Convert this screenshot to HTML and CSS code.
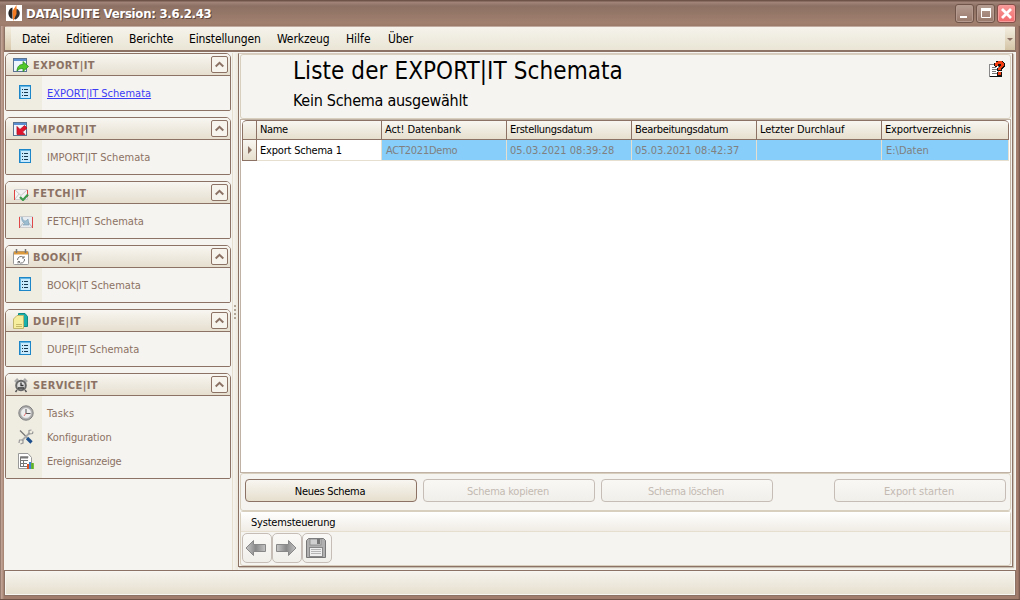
FILE: index.html
```html
<!DOCTYPE html>
<html lang="de">
<head>
  <meta charset="utf-8"/>
  <title>DATA|SUITE</title>
  <link rel="stylesheet" href="styles.css">
</head>
<body>
  <!-- Shared icons -->
  <svg class="hidden">
    <symbol id="list" viewBox="0 0 12 14">
      <rect x=".5" y=".5" width="11" height="13" fill="#c9eafc" stroke="#1c86c8"/>
      <path d="M1 1.5h10M1.5 1v12" stroke="#65b5e2"/>
      <path d="M3 4.500h1M3 7.500h1M3 10.500h1M5 4.500h4M5 7.500h4M5 10.500h4" stroke="#183850"/>
    </symbol>
    <symbol id="chevron" viewBox="0 0 15 15">
      <path d="M3.700 9.500l3.800-3.700 3.800 3.700" fill="none" stroke="#8b7264" stroke-width="2"/>
    </symbol>
    <linearGradient id="gray" x1="0" y1="0" x2="1" y2="0"><stop offset="0" stop-color="#c8c8c8"/><stop offset=".5" stop-color="#888"/><stop offset="1" stop-color="#c4c4c4"/></linearGradient>
  </svg>

  <div class="window">
    <div class="titlebar">
      <svg class="logo" width="16" height="16" viewBox="0 0 16 16">
        <rect width="16" height="16" fill="#fff"/>
        <path d="M6.500 2.500C1 4 1 12.500 6.500 14z" fill="#222"/>
        <path d="M10.500 3.500c4.500 2 4.500 8-1 11L8 14z" fill="#333"/>
        <path d="M10.500 0L6.500 6l.7 10L10.500 9z" fill="#f47b20"/>
      </svg>
      <span class="title">DATA|SUITE Version: 3.6.2.43</span>
      <div class="win-btn"><svg width="17" height="17"><path d="M4 12h7" stroke="#fff" stroke-width="2"/></svg></div>
      <div class="win-btn"><svg width="17" height="17"><path d="M4 4.500h10" stroke="#fff" stroke-width="3"/><path d="M4.500 5v7.500h9V5" fill="none" stroke="#fff"/></svg></div>
      <div class="win-btn close"><svg width="17" height="17"><path d="M4 4l9 9M13 4l-9 9" stroke="#fff" stroke-width="2.800"/></svg></div>
    </div>

    <div class="menubar">
      <div class="grip"></div>
      <span class="m1">Datei</span>
      <span class="m2">Editieren</span>
      <span class="m3">Berichte</span>
      <span class="m4">Einstellungen</span>
      <span class="m5">Werkzeug</span>
      <span class="m6">Hilfe</span>
      <span class="m7">Über</span>
      <div class="overflow"></div>
    </div>

    <div class="content">
      <div class="sidebar">
        <div class="group">
          <div class="group-head">
            <svg width="16" height="16"><rect x=".5" y="1.500" width="13" height="13" fill="#eef5fc" stroke="#5b7393"/><path d="M1 3h12" stroke="#5b8ed0" stroke-width="2"/><path d="M4 14c.5-5 2.500-6.500 6-6.500V4.500l5.500 5-5.500 5v-3c-3 0-4 .5-6 2.500z" fill="#55c829" stroke="#2b9220" stroke-width=".8"/></svg>
            <span class="w1">EXPORT|IT</span>
            <div class="toggle"><svg><use href="#chevron"/></svg></div>
          </div>
          <div class="group-body">
            <div class="item active"><i><svg width="12" height="14"><use href="#list"/></svg></i><a>EXPORT|IT Schemata</a></div>
          </div>
        </div>
        <div class="group">
          <div class="group-head">
            <svg width="16" height="16"><rect x=".5" y="1.500" width="13" height="13" fill="#eef5fc" stroke="#5b7393"/><path d="M1 3h12" stroke="#5b8ed0" stroke-width="2"/><path d="M4 5.500v8h8l-2.500-2.500L14 7l-2.500-2.500-4.500 4z" fill="#e0142c" stroke="#b30f22" stroke-width=".8"/></svg>
            <span class="w2">IMPORT|IT</span>
            <div class="toggle"><svg><use href="#chevron"/></svg></div>
          </div>
          <div class="group-body">
            <div class="item"><i><svg width="12" height="14"><use href="#list"/></svg></i><a class="i">IMPORT|IT Schemata</a></div>
          </div>
        </div>
        <div class="group">
          <div class="group-head">
            <svg width="16" height="16"><path d="M1.500 4.500h13v10h-13z" fill="#f3f3f3" stroke="#ccc"/><path d="M1.500 5v10M14.500 5v7" stroke="#e04040"/><path d="M2 5l6 5.500L14 5M2 14l4-5" fill="none" stroke="#bbb" stroke-width=".8"/><path d="M7 12l3 3 5-5.500" fill="none" stroke="#3f9a4d" stroke-width="2.200"/></svg>
            <span class="w3">FETCH|IT</span>
            <div class="toggle"><svg><use href="#chevron"/></svg></div>
          </div>
          <div class="group-body">
            <div class="item"><i class="wide"><svg width="14" height="13" class="low"><path d="M.5 1.500h13v11H.5z" fill="#e6ecf0" stroke="#ccc"/><path d="M.5 2v11M13.500 2v11" stroke="#e04848"/><path d="M1 12l4-5M13 12L9 7" stroke="#b5b5b5"/><path d="M3 2c0 3 2 4 4 4l2-2 1 6H4l2-1.500C4 7.500 2 5 3 2z" fill="#9dbdd0" stroke="#7b9db2" stroke-width=".6"/></svg></i><a class="f">FETCH|IT Schemata</a></div>
          </div>
        </div>
        <div class="group">
          <div class="group-head">
            <svg width="16" height="16"><rect x=".5" y="2.500" width="15" height="13" rx="1" fill="#fff" stroke="#999"/><path d="M1 4h14" stroke="#dd9a3c" stroke-width="3"/><path d="M3.500 0v4M12.500 0v4" stroke="#777" stroke-width="1.500"/><path d="M4.500 11a3.500 3.500 0 0 1 6-2.500M11.500 10a3.500 3.500 0 0 1-6 3M9 9h2V7M7 12.500H5v2" fill="none" stroke="#666" stroke-width=".9"/></svg>
            <span class="w4">BOOK|IT</span>
            <div class="toggle"><svg><use href="#chevron"/></svg></div>
          </div>
          <div class="group-body">
            <div class="item"><i><svg width="12" height="14"><use href="#list"/></svg></i><a class="b">BOOK|IT Schemata</a></div>
          </div>
        </div>
        <div class="group">
          <div class="group-head">
            <svg width="16" height="16"><path d="M5.500.5H12l2.500 3v10h-9z" fill="#19b0ac" stroke="#138985"/><path d="M4 2.500h6.500v13H.5V6z" fill="#f6ee9c" stroke="#c0b56c"/><path d="M3 11.500h6M3 13.500h6" stroke="#c7b96a"/></svg>
            <span class="w5">DUPE|IT</span>
            <div class="toggle"><svg><use href="#chevron"/></svg></div>
          </div>
          <div class="group-body">
            <div class="item"><i><svg width="12" height="14"><use href="#list"/></svg></i><a class="d">DUPE|IT Schemata</a></div>
          </div>
        </div>
        <div class="group service">
          <div class="group-head">
            <svg width="16" height="16"><path d="M2 5l3-3M14 5l-3-3" stroke="#aaa" stroke-width="2.500"/><path d="M4 13l-1.500 2M12 13l1.500 2" stroke="#555" stroke-width="1.500"/><circle cx="8" cy="8.500" r="4.800" fill="#ddd" stroke="#666" stroke-width="2"/><path d="M8 5.500v3h2.500M5 11h6" fill="none" stroke="#333" stroke-width="1.300"/></svg>
            <span class="w6">SERVICE|IT</span>
            <div class="toggle"><svg><use href="#chevron"/></svg></div>
          </div>
          <div class="group-body">
            <div class="item"><i class="wide"><svg width="16" height="16"><circle cx="8" cy="8" r="7.200" fill="#aaa" stroke="#808080"/><circle cx="8" cy="8" r="5.300" fill="#eee" stroke="#bbb" stroke-width=".6"/><path d="M8 4v4.500h4.500" fill="none" stroke="#555"/><path d="M8 8l-2 3" stroke="#e67070"/></svg></i><a class="s1">Tasks</a></div>
            <div class="item"><i class="wide"><svg width="16" height="16"><path d="M2 1.500l7 7" stroke="#777" stroke-width="1.300"/><path d="M9 9l4.500 4.500" stroke="#1d4f8c" stroke-width="3.200"/><path d="M4 11.500L11.500 4" stroke="#aaa" stroke-width="1.800"/><path d="M13.500 1l-2.500.5v3.500l3.500-.5.5-2M4.500 11H1.500L1 14M2.500 15l2.500-1v-3" fill="none" stroke="#999" stroke-width="1.200"/></svg></i><a class="s2">Konfiguration</a></div>
            <div class="item"><i class="wide"><svg width="16" height="16"><path d="M.5.500h9.500l3.500 4v11H.5z" fill="#fff" stroke="#999"/><path d="M2.500 4h8M2 7.500h8M2 10.500h7M2 13.500h7M2.500 4v10M5.500 7v7" stroke="#777"/><path d="M2 4.500h8" stroke="#777" stroke-width="2"/><path d="M10 11v5" stroke="#e0501c" stroke-width="2"/><path d="M12 9v7" stroke="#3a84d8" stroke-width="2"/><path d="M14.500 10v6" stroke="#5fb325" stroke-width="2.600"/></svg></i><a class="s3">Ereignisanzeige</a></div>
          </div>
        </div>
      </div>

      <div class="splitter"><b></b><b></b><b></b><b></b></div>

      <div class="main">
        <div class="header">
          <div>
            <h1>Liste der EXPORT|IT Schemata</h1>
            <h2>Kein Schema ausgewählt</h2>
          </div>
          <svg width="16" height="17" shape-rendering="crispEdges"><path d="M.5 3.500h9v12h-9z" fill="#fff" stroke="#888"/><path d="M1 15.500h11v-4" fill="none" stroke="#111"/><path d="M3 6.500h4M3 8.500h5M3 10.500h4M3 12.500h5" stroke="#777"/><path d="M5 5V2h2V0h7v1h1v1h1v4h-1v1h-1v1h-1v2H8V7h2V5H8v1H6z" fill="#111"/><path d="M6 2h1V1h2V0h4v1h1v1h1v3h-1v1h-1v1h-1v2H9V7h1V6h1V5h1V3H9v2H6z" fill="#f43d10"/><path d="M8 11h5v4H8z" fill="#111"/><path d="M9 11h3v3H9z" fill="#f43d10"/></svg>
        </div>

        <div class="grid">
          <div class="grid-row head">
            <span></span>
            <span class="c1">Name</span>
            <span class="c2">Act! Datenbank</span>
            <span class="c3">Erstellungsdatum</span>
            <span class="c4">Bearbeitungsdatum</span>
            <span class="c5">Letzter Durchlauf</span>
            <span class="c6">Exportverzeichnis</span>
          </div>
          <div class="grid-row data">
            <span class="marker"></span>
            <span class="focused">Export Schema 1</span>
            <span class="r2">ACT2021Demo</span>
            <span class="r3">05.03.2021 08:39:28</span>
            <span class="r3">05.03.2021 08:42:37</span>
            <span></span>
            <span class="r6">E:\Daten</span>
          </div>
        </div>

        <div class="actions">
          <button class="button b1">Neues Schema</button>
          <button class="button b2" disabled>Schema kopieren</button>
          <button class="button b3" disabled>Schema löschen</button>
          <button class="button b4" disabled>Export starten</button>
        </div>

        <div class="system">
          <div class="system-head"><span>Systemsteuerung</span></div>
          <div class="tools">
            <div class="tool"><svg width="22" height="20"><path d="M1 10L8.500 2.500V6.500h12v7h-12v4z" fill="url(#gray)" stroke="#888"/></svg></div>
            <div class="tool"><svg width="22" height="20"><path d="M21 10l-7.500-7.500v4h-12v7h12v4z" fill="url(#gray)" stroke="#888"/></svg></div>
            <div class="tool"><svg width="20" height="20"><path d="M2.500.5h15l2 2v17H.5v-17z" fill="#b0b0b0" stroke="#777"/><rect x="4" y="1" width="11" height="6" fill="#d0d0d0" stroke="#888" stroke-width=".8"/><rect x="11" y="1" width="3" height="5" fill="#777"/><rect x="3.500" y="9.500" width="13" height="9" fill="#eee" stroke="#888"/><path d="M5 11.500h10M5 13.500h10M5 15.500h10" stroke="#b5b5b5"/></svg></div>
          </div>
        </div>
      </div>
    </div>

    <div class="statusbar"></div>
  </div>
</body>
</html>
```
FILE: styles.css
```css
* {
  box-sizing: border-box;
}
body {
  margin: 0;
  font-family: "DejaVu Sans Condensed", "DejaVu Sans", sans-serif;
  font-stretch: condensed;
  font-size: 11px;
  color: #000;
}
.hidden {
  position: absolute;
  width: 0;
  height: 0;
}
svg {
  display: block;
  flex: none;
}
span, a, h1, h2 {
  white-space: nowrap;
}

.window {
  width: 1020px;
  height: 600px;
  display: flex;
  flex-direction: column;
  padding: 0 4px 4px;
  background: linear-gradient(to right, #6e5349 0, #c3a799 1px, #b29181 3px, #a07d6d 4px, #a07d6d 1016px, #a27b6b 1018px, #6e5349 1020px);
  box-shadow: inset 0 -1px 0 #6e5349;
}

/* Title bar */
.titlebar {
  height: 26px;
  margin: 0 -4px;
  padding: 4px 4px 0 6px;
  display: flex;
  align-items: flex-start;
  gap: 2px;
  background: linear-gradient(#6e5349 0, #6e5349 1px, #a38679 2px, #8c7063 6px, #a1806f 23px, #9b7a6a);
}
.logo {
  margin-top: 1px;
}
.title {
  flex: 1;
  margin-left: 2px;
  font-size: 13px;
  line-height: 19px;
  font-weight: bold;
  letter-spacing: -0.25px;
  color: #fff;
  text-shadow: 1px 1px 0 #5f483e;
}
.win-btn {
  width: 19px;
  height: 19px;
  border: 1px solid #70564a;
  border-radius: 3px;
  background: linear-gradient(#b59d92, #98796b);
  box-shadow: inset 0 0 0 1px #b59a8f;
}
.close {
  background: linear-gradient(#f79a98, #f26b6d);
  box-shadow: inset 0 0 0 1px #f79e9c;
  border-color: #85504a;
}

/* Menu */
.menubar {
  height: 26px;
  display: flex;
  border: 1px solid #8b7264;
  border-top-color: #c1aaa0;
  border-bottom-width: 2px;
  border-radius: 3px 3px 0 0;
  background: linear-gradient(#f5f3ec, #eae5d5);
  font-size: 12px;
  line-height: 25px;
}
.grip {
  width: 6px;
  margin-right: 11px;
  background: linear-gradient(#f3eee0, #d8c8ab);
}
.overflow {
  width: 10px;
  margin-left: auto;
  background: linear-gradient(#f3eee0, #d4c4a6);
  display: flex;
  align-items: center;
  justify-content: center;
}
.overflow::after {
  content: "";
  margin-top: 2px;
  border: 3px solid transparent;
  border-top-color: #8b7264;
  border-bottom: 0;
}
.m1 { width: 44px; letter-spacing: -0.2px; }
.m2 { width: 63px; letter-spacing: -0.1px; }
.m3 { width: 60px; letter-spacing: -0.1px; }
.m4 { width: 88px; letter-spacing: -0.12px; }
.m5 { width: 69px; letter-spacing: -0.1px; }
.m6 { width: 42px; }
.m7 { letter-spacing: -0.2px; }

/* Sidebar */
.content {
  flex: 1;
  min-height: 0;
  display: flex;
  padding-top: 1px;
  background: #f6f4f0;
}
.sidebar {
  width: 228px;
  padding-left: 1px;
  display: flex;
  flex-direction: column;
  gap: 6px;
}
.group {
  width: 226px;
  border: 1px solid #8b7264;
  border-radius: 5px 5px 2px 2px;
  overflow: hidden;
}
.group-head {
  height: 22px;
  display: flex;
  align-items: center;
  padding: 0 2px 0 7px;
  border-bottom: 1px solid #8b7264;
  background: linear-gradient(#f8f6f1, #e6dfd0);
  color: #8b7264;
  font-weight: bold;
}
.group-head span {
  margin-left: 4px;
  padding-top: 1px;
}
.w1 { letter-spacing: 0.45px; }
.w2 { letter-spacing: 0.75px; }
.w3 { letter-spacing: 0.45px; }
.w4 { letter-spacing: 0.45px; }
.w5 { letter-spacing: 0.55px; }
.w6 { letter-spacing: 0.4px; }
.toggle {
  width: 17px;
  height: 17px;
  margin-left: auto;
  border: 1px solid #8b7264;
  border-radius: 2px;
  background: #f7f4ee;
}
.toggle svg {
  width: 15px;
  height: 15px;
}
.group-body {
  height: 34px;
  padding-top: 5px;
  background: linear-gradient(to right, #efece1 36px, #f6f4f0 36px);
}
.service .group-body {
  height: 82px;
}
.item {
  height: 24px;
  display: flex;
  align-items: center;
  color: #8b7264;
}
.item i {
  width: 41px;
  display: flex;
  justify-content: center;
  padding: 0 3px 2px 0;
}
.item .wide {
  padding: 0 1px 1px 0;
}
.item .low {
  margin-top: 2px;
}
.i { letter-spacing: 0.05px; }
.s1 { letter-spacing: 0.2px; }
.s2 { letter-spacing: -0.12px; }
.s3 { letter-spacing: -0.25px; }
.active a {
  color: #3c3cf5;
  text-decoration: underline;
}

.splitter {
  width: 6px;
  border-left: 1px solid #e6dfd0;
  background: linear-gradient(to right, #f6f4f0, #ede8dc);
  display: flex;
  flex-direction: column;
  align-items: center;
  justify-content: center;
  gap: 2px;
  padding-right: 1px;
}
.splitter b {
  width: 2px;
  height: 2px;
  background: #b3a596;
}

/* Main area */
.main {
  width: 775px;
  height: 514px;
  display: flex;
  flex-direction: column;
  padding: 0 1px;
  border: 1px solid #8b7264;
  border-top-color: #d5c9be;
  background: #f6f4f0;
  box-shadow: 1px 1px 1px #c9c0b4;
}
.header {
  height: 65px;
  display: flex;
  justify-content: space-between;
  padding: 0 5px 0 52px;
  border: 1px solid #d8cfbf;
  border-radius: 3px;
}
h1 {
  margin: 1px 0 0;
  font-size: 24px;
  line-height: 30px;
  font-weight: normal;
  letter-spacing: 0.08px;
}
h2 {
  margin: 5px 0 0;
  font-size: 16px;
  line-height: 20px;
  font-weight: normal;
  letter-spacing: -0.27px;
}
.header svg {
  margin-top: 6px;
}
.grid {
  height: 354px;
  border: 1px solid #c1b2a6;
  padding: 0 1px;
  background: #fff;
}
.grid-row {
  display: grid;
  grid-template-columns: 15px repeat(5, 125px) 127px;
}
.head {
  height: 20px;
  border: 1px solid #8b7264;
  border-width: 1px 0;
  border-radius: 5px 5px 0 0;
  overflow: hidden;
  background: linear-gradient(#f8f6f1, #e6dfce);
}
.head span {
  padding-left: 3px;
  line-height: 17px;
  border-right: 1px solid #8b7264;
}
.head span:first-child {
  border-left: 1px solid #8b7264;
}
.c1 { letter-spacing: -0.4px; }
.c2 { letter-spacing: -0.1px; }
.c3 { letter-spacing: -0.3px; }
.c4 { letter-spacing: -0.3px; }
.c5 { letter-spacing: -0.08px; }
.c6 { letter-spacing: -0.15px; }
.data {
  height: 21px;
}
.data span {
  height: 21px;
  padding-left: 3px;
  line-height: 21px;
  background: #87cefa;
  color: #808080;
  border-right: 1px solid #e6dfd0;
  border-bottom: 1px solid #e6dfd0;
}
.data .focused {
  background: #fff;
  color: #000;
  letter-spacing: -0.2px;
}
.data .r2 { padding-left: 4px; letter-spacing: -0.25px; }
.r3 { letter-spacing: 0; }
.data .r6 { padding-left: 4px; }
.data .marker {
  display: flex;
  align-items: center;
  border: 1px solid #8b7264;
  border-top: 0;
  background: linear-gradient(#f8f6f1, #e6dfce);
}
.marker::after {
  content: "";
  margin-left: 2px;
  border: 4px solid transparent;
  border-left-color: #8b7264;
  border-right: 0;
}

.actions {
  height: 38px;
  display: flex;
  gap: 6px;
  padding: 5px 4px;
  border: 1px solid #d8cfbf;
  border-radius: 3px;
}
.button {
  width: 172px;
  height: 23px;
  padding: 1px 2px 0 0;
  border: 1px solid #8b7264;
  border-radius: 4px;
  background: linear-gradient(#f8f6f1, #e6dfce);
  font: inherit;
  color: #000;
}
.button:disabled {
  border-color: #c5bdb6;
  background: linear-gradient(#f9f8f5, #f1efea);
  color: #c3bab2;
}
.b1 { letter-spacing: -0.3px; }
.b2 { letter-spacing: -0.25px; }
.b3 { letter-spacing: -0.35px; }
.b4 {
  margin-left: auto;
  letter-spacing: -0.05px;
}
.system {
  flex: 1;
  border: 1px solid #d8cfbf;
  border-radius: 3px;
}
.system-head {
  height: 20px;
  padding-left: 10px;
  line-height: 21px;
  letter-spacing: -0.2px;
  border-bottom: 1px solid #e6dfd0;
  background: linear-gradient(#fff, #f0ece5);
}
.tools {
  display: flex;
  padding: 1px;
}
.tool {
  width: 30px;
  height: 30px;
  display: flex;
  align-items: center;
  justify-content: center;
  padding: 0 2px 0 0;
  border: 1px solid #c5bdb6;
  border-radius: 5px;
  background: linear-gradient(#faf9f7, #f1efea);
}

.statusbar {
  height: 26px;
  border: 1px solid #8b7264;
  background: linear-gradient(#f6f4ee, #e6dfce);
  box-shadow: inset 0 0 0 1px #f8f6f1;
}
```
